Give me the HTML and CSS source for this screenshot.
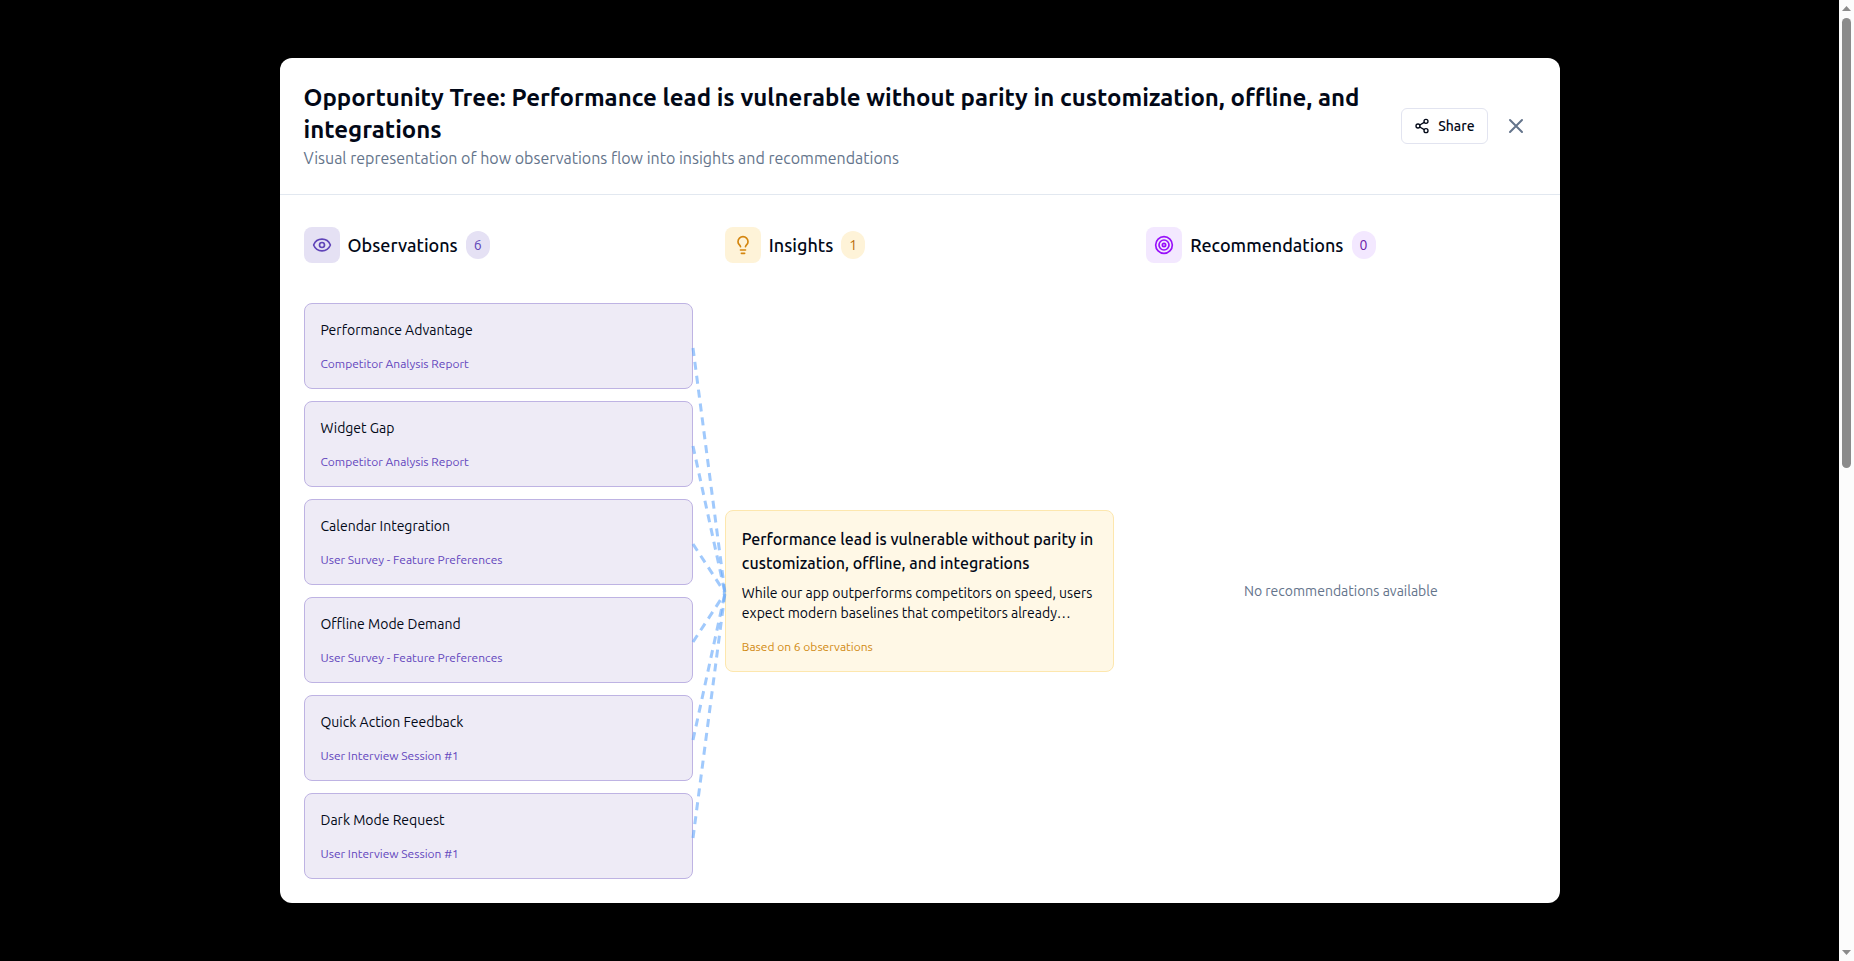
FILE: index.html
```
<!DOCTYPE html>
<html lang="en">
<head>
    <meta charset="UTF-8">
    <title>Opportunity Tree</title>
    <link rel="stylesheet" href="styles.css">
</head>
<body>

<div class="overlay">
    <main class="modal" role="dialog" aria-labelledby="tree-title">
        <header class="modal-header">
            <div class="modal-heading">
                <h1 id="tree-title">Opportunity Tree: Performance lead is vulnerable without parity in customization, offline, and integrations</h1>
                <p>Visual representation of how observations flow into insights and recommendations</p>
            </div>
            <div class="modal-actions">
                <button class="share-button" type="button">
                    <svg class="icon" width="16" height="16" viewBox="0 0 24 24">
                        <circle cx="18" cy="5" r="3"/>
                        <circle cx="6" cy="12" r="3"/>
                        <circle cx="18" cy="19" r="3"/>
                        <path d="M8.59 13.51l6.83 3.98M15.41 6.51l-6.82 3.98"/>
                    </svg>
                    Share
                </button>
                <button class="close-button" type="button" aria-label="Close">
                    <svg class="icon" width="24" height="24" viewBox="0 0 24 24">
                        <path d="M18 6L6 18M6 6l12 12"/>
                    </svg>
                </button>
            </div>
        </header>

        <div class="tree">
            <section class="column observations">
                <div class="column-header">
                    <span class="column-icon">
                        <svg class="icon" width="20" height="20" viewBox="0 0 24 24">
                            <path d="M2.06 12.35a1 1 0 0 1 0-.7 10.75 10.75 0 0 1 19.88 0 1 1 0 0 1 0 .7 10.75 10.75 0 0 1-19.88 0"/>
                            <circle cx="12" cy="12" r="3"/>
                        </svg>
                    </span>
                    <h2>Observations</h2>
                    <span class="badge">6</span>
                </div>
                <div class="column-body">
                    <article class="card">
                        <h3>Performance Advantage</h3>
                        <p class="source">Competitor Analysis Report</p>
                    </article>
                    <article class="card">
                        <h3>Widget Gap</h3>
                        <p class="source">Competitor Analysis Report</p>
                    </article>
                    <article class="card">
                        <h3>Calendar Integration</h3>
                        <p class="source">User Survey - Feature Preferences</p>
                    </article>
                    <article class="card">
                        <h3>Offline Mode Demand</h3>
                        <p class="source">User Survey - Feature Preferences</p>
                    </article>
                    <article class="card">
                        <h3>Quick Action Feedback</h3>
                        <p class="source">User Interview Session #1</p>
                    </article>
                    <article class="card">
                        <h3>Dark Mode Request</h3>
                        <p class="source">User Interview Session #1</p>
                    </article>

                    <!-- observation -> insight links, drawn over the column gap -->
                    <svg class="links" viewBox="0 0 32 576" preserveAspectRatio="none">
                        <path d="M0 45L32 290"/>
                        <path d="M0 143L32 290"/>
                        <path d="M0 241L32 290"/>
                        <path d="M0 339L32 290"/>
                        <path d="M0 437L32 290"/>
                        <path d="M0 535L32 290"/>
                    </svg>
                </div>
            </section>

            <section class="column insights">
                <div class="column-header">
                    <span class="column-icon">
                        <svg class="icon" width="20" height="20" viewBox="0 0 24 24">
                            <path d="M15 14c.2-1 .7-1.7 1.5-2.5 1-.9 1.5-2.2 1.5-3.5A6 6 0 0 0 6 8c0 1 .2 2.2 1.5 3.5.7.7 1.3 1.5 1.5 2.5"/>
                            <path d="M9 18h6M10 22h4"/>
                        </svg>
                    </span>
                    <h2>Insights</h2>
                    <span class="badge">1</span>
                </div>
                <div class="column-body">
                    <article class="card">
                        <h3>Performance lead is vulnerable without parity in customization, offline, and integrations</h3>
                        <p class="description">While our app outperforms competitors on speed, users expect modern baselines that competitors already…</p>
                        <p class="source">Based on 6 observations</p>
                    </article>
                </div>
            </section>

            <section class="column recommendations">
                <div class="column-header">
                    <span class="column-icon">
                        <svg class="icon" width="20" height="20" viewBox="0 0 24 24">
                            <circle cx="12" cy="12" r="10"/>
                            <circle cx="12" cy="12" r="6"/>
                            <circle cx="12" cy="12" r="2"/>
                        </svg>
                    </span>
                    <h2>Recommendations</h2>
                    <span class="badge">0</span>
                </div>
                <div class="column-body">
                    <p class="empty">No recommendations available</p>
                </div>
            </section>
        </div>
    </main>
</div>

<div class="scrollbar" aria-hidden="true">
    <svg width="9" height="5" viewBox="0 0 9 5"><path d="M0 5L4.5 0L9 5z"/></svg>
    <div class="scroll-track">
        <div class="scroll-thumb"></div>
    </div>
    <svg width="9" height="5" viewBox="0 0 9 5"><path d="M0 0L4.5 5L9 0z"/></svg>
</div>

</body>
</html>
```
FILE: styles.css
```
* {
    box-sizing: border-box;
}

body {
    margin: 0;
    display: flex;
    min-height: 100vh;
    background: #000;
    color: #020817;
    font-family: Ubuntu, "Noto Sans", sans-serif;
    font-size: 16px;
    line-height: 24px;
}

h1, h2, h3, p {
    margin: 0;
}

button {
    font-family: inherit;
    cursor: pointer;
}

.icon {
    display: block;
    flex-shrink: 0;
    fill: none;
    stroke: currentColor;
    stroke-width: 2;
    stroke-linecap: round;
    stroke-linejoin: round;
}

/* Modal */
.overlay {
    flex: 1;
    display: flex;
    align-items: center;
    justify-content: center;
    padding: 16px;
}

.modal {
    width: 100%;
    max-width: 1280px;
    background: #fff;
    border-radius: 12px;
}

.modal-header {
    display: flex;
    align-items: center;
    justify-content: space-between;
    gap: 16px;
    padding: 24px;
    border-bottom: 1px solid #e2e8f0;
}

.modal-heading h1 {
    font-size: 24px;
    font-weight: 600;
    line-height: 32px;
}

.modal-heading p {
    color: #64748b;
}

.modal-actions {
    display: flex;
    align-items: center;
    gap: 8px;
}

.share-button {
    display: flex;
    align-items: center;
    gap: 8px;
    height: 36px;
    padding: 0 12px;
    border: 1px solid #e2e4f0;
    border-radius: 6px;
    background: #fff;
    color: #020817;
    font-size: 14px;
    font-weight: 500;
    line-height: 20px;
}

.close-button {
    padding: 8px;
    border: none;
    background: transparent;
    color: #64748b;
}

/* Columns */
.tree {
    display: grid;
    grid-template-columns: repeat(3, minmax(0, 1fr));
    gap: 32px;
    padding: 32px 24px 24px;
}

.column {
    display: flex;
    flex-direction: column;
    gap: 40px;
}

.column-header {
    display: flex;
    align-items: center;
    gap: 8px;
}

.column-header h2 {
    font-size: 18px;
    font-weight: 500;
    line-height: 28px;
}

.column-icon {
    padding: 8px;
    border-radius: 8px;
}

.badge {
    min-width: 24px;
    padding: 4px 8px;
    border-radius: 14px;
    font-size: 14px;
    line-height: 20px;
    text-align: center;
}

.column-body {
    position: relative;
    flex: 1;
    display: flex;
    flex-direction: column;
    justify-content: center;
    gap: 12px;
}

/* Cards */
.card {
    padding: 16px;
    border: 1px solid;
    border-radius: 8px;
}

.card h3 {
    font-size: 14px;
    font-weight: 400;
    line-height: 20px;
}

.source {
    margin-top: 16px;
    font-size: 12px;
    line-height: 16px;
}

.description {
    margin-top: 8px;
    font-size: 14px;
    line-height: 20px;
}

.empty {
    color: #64748b;
    font-size: 14px;
    line-height: 20px;
    text-align: center;
}

.observations .column-icon,
.observations .badge {
    background: #e5e1f4;
    color: #5f43b8;
}

.observations .card {
    background: #eeebf6;
    border-color: #beb3e3;
}

.observations .source {
    color: #6346bd;
}

.insights .column-icon,
.insights .badge {
    background: #fef3d8;
    color: #d4860f;
}

.insights .badge {
    color: #b86a08;
}

.insights .card {
    background: #fff8e6;
    border-color: #fde7ae;
}

.insights .card h3 {
    font-size: 16px;
    font-weight: 500;
    line-height: 24px;
}

.insights .source {
    color: #d18a12;
}

.recommendations .column-icon,
.recommendations .badge {
    background: #f3e8ff;
    color: #9810fa;
}

.recommendations .badge {
    color: #6b21a8;
}

.links {
    position: absolute;
    top: 0;
    left: 100%;
    z-index: 1;
    width: 32px;
    height: 100%;
    overflow: visible;
    fill: none;
    stroke: #60a5fa;
    stroke-opacity: .6;
    stroke-width: 3;
    stroke-dasharray: 8 6;
}

/* Scrollbar */
.scrollbar {
    display: flex;
    flex-direction: column;
    align-items: center;
    gap: 7px;
    width: 15px;
    height: 100vh;
    padding: 6px 0;
    background: #fcfcfc;
    fill: #8b8b8b;
}

.scroll-track {
    flex: 1;
}

.scroll-thumb {
    width: 9px;
    height: 450px;
    border-radius: 5px;
    background: #8b8b8b;
}
```
